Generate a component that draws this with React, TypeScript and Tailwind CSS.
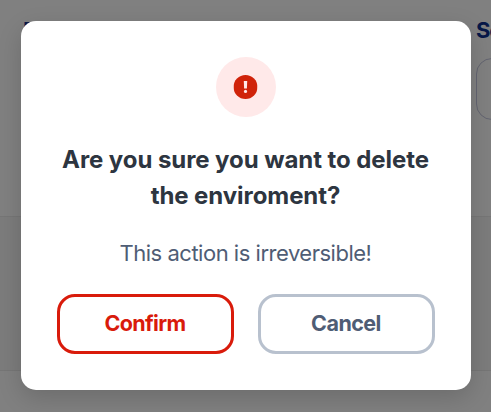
import React from "react";

function AlertIcon() {
  return (
    <div className="flex size-[60px] items-center justify-center rounded-full bg-[#ffe9e9]">
      <svg width="24" height="24" viewBox="0 0 24 24" className="-translate-x-[0.5px]">
        <circle cx="12" cy="12" r="12" fill="#d0230a" />
        <path d="M10.3 6h3.4l-.3 7.6h-2.8z" fill="#ffe9e9" />
        <circle cx="12" cy="16.4" r="1.6" fill="#ffe9e9" />
      </svg>
    </div>
  );
}

function Backdrop() {
  return (
    <div className="absolute inset-0 flex flex-col bg-[#808080]" aria-hidden="true">
      <div className="flex h-[216px] shrink-0 justify-between pt-[12px] pl-[23px] text-[22px] leading-9 font-bold tracking-[-0.05em] text-[#071848]">
        <span className="tracking-[-0.04em]">Envi</span>
        <div className="w-[15px] shrink-0">
          <div className="whitespace-nowrap">Se</div>
          <div className="mt-[10px] h-[62px] w-[200px] rounded-[16px] border border-[#636470]" />
        </div>
      </div>
      <div className="h-[155px] shrink-0 border-y border-[#767676] bg-[#7c7c7c]" />
    </div>
  );
}

export default function App() {
  return (
    <div className="relative h-[412px] w-[491px] overflow-hidden font-['Inter',sans-serif]">
      <Backdrop />
      <div className="relative flex h-full items-start justify-center pt-[21px]">
        <div
          role="dialog"
          className="flex h-[369px] w-[450px] flex-col items-center rounded-[15px] bg-white p-9 shadow-[0_8px_24px_rgba(0,0,0,0.16)]"
        >
          <AlertIcon />
          <h2 className="mt-[25px] text-center text-[24px] leading-9 font-bold tracking-[-0.003em] whitespace-nowrap text-[#2d3540]">
            Are you sure you want to delete
            <br />
            the enviroment?
          </h2>
          <p className="mt-6 text-[22px] leading-[30px] tracking-[-0.022em] text-[#4f5d75]">This action is irreversible!</p>
          <div className="mt-[26px] flex gap-6">
            <button className="h-[60px] w-[177px] rounded-[18px] border-3 border-[#d91b0b] pb-0.5 text-[21.5px] font-bold tracking-[-0.031em] text-[#d91b0b]">
              Confirm
            </button>
            <button className="h-[60px] w-[177px] rounded-[18px] border-3 border-[#b8c1ce] pb-0.5 text-[21.5px] font-bold tracking-[-0.025em] text-[#4f5d75]">
              Cancel
            </button>
          </div>
        </div>
      </div>
    </div>
  );
}
